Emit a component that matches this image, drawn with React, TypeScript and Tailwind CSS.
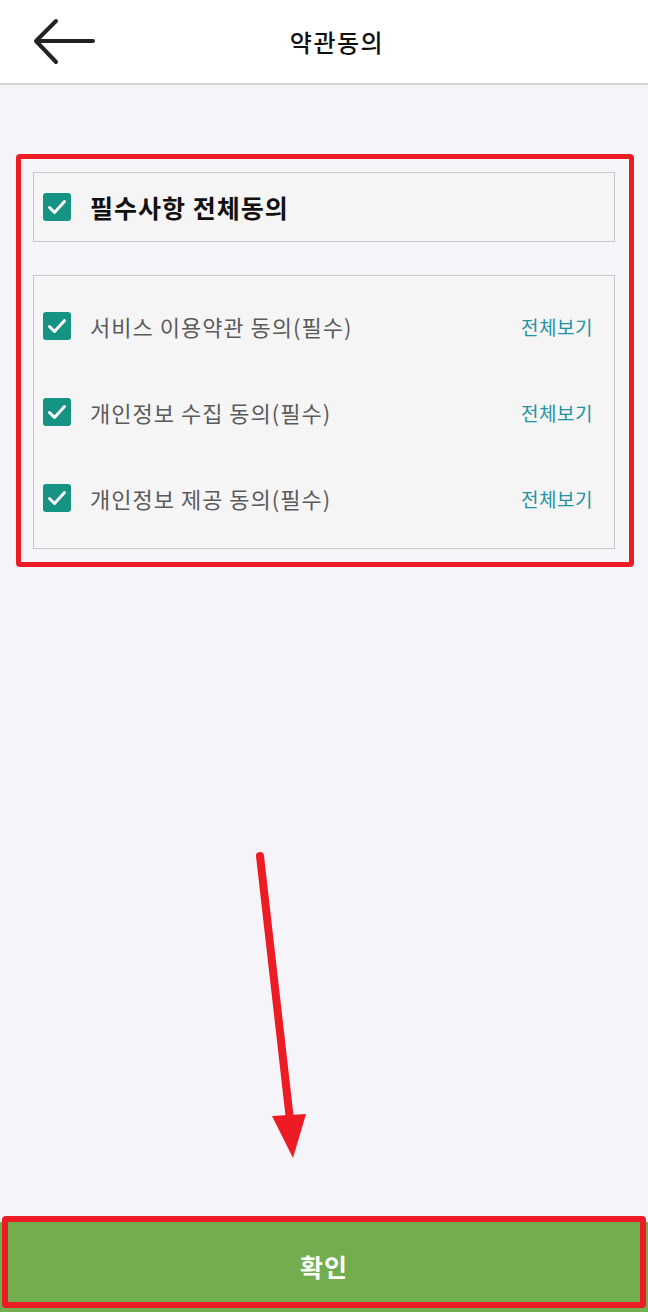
import React from "react";

const font = { fontFamily: '"Noto Sans CJK KR", "Noto Sans", sans-serif' };

function Check() {
  return (
    <div className="w-[28px] h-[28px] rounded-[3px] bg-[#159383] flex items-center justify-center shrink-0">
      <svg width="28" height="28" viewBox="0 0 28 28">
        <path d="M6.5 14.5 L11.5 19.5 L21.5 8.5" fill="none" stroke="#ffffff" strokeWidth="3" strokeLinecap="round" strokeLinejoin="round" />
      </svg>
    </div>
  );
}

function Row({ label }: { label: string }) {
  return (
    <div className="h-[86px] flex items-center pl-[9px] pr-[21px]">
      <Check />
      <span className="ml-[19px] text-[22px] tracking-[1px] text-[#5b5b5b] leading-none flex-1">{label}</span>
      <span className="text-[19px] tracking-[0.5px] text-[#2293a5] leading-none">전체보기</span>
    </div>
  );
}

export default function App() {
  return (
    <div className="relative w-[648px] h-[1312px] flex flex-col bg-[#f4f4f9] overflow-hidden" style={font}>
      <header className="h-[85px] shrink-0 bg-white border-b-2 border-[#d3d3d3] flex items-center relative">
        <div className="absolute left-[31px] top-[18px]">
          <svg width="66" height="48" viewBox="0 0 66 48">
            <path d="M62 23 H6 M25 3 L5 23 L25 44" fill="none" stroke="#222222" strokeWidth="4" strokeLinecap="round" strokeLinejoin="round" />
          </svg>
        </div>
        <div className="flex-1 text-center pl-[26px] text-[24px] tracking-[1.5px] font-medium text-[#111111] leading-none">약관동의</div>
      </header>

      <main className="flex-1 pt-[69px]">
        <div className="ml-[16px] w-[618px] border-[5px] border-[#ed1c24] rounded-[4px] pl-[12px] pr-[14px] pt-[13px] pb-[13px]">
          <div className="h-[70px] border border-[#c9c9c9] bg-[#f5f5f5] flex items-center pl-[9px]">
            <Check />
            <span className="ml-[19px] text-[25px] tracking-[1px] font-bold text-[#111111] leading-none">필수사항 전체동의</span>
          </div>
          <div className="mt-[33px] border border-[#c9c9c9] bg-[#f5f5f5] py-[7px]">
            <Row label="서비스 이용약관 동의(필수)" />
            <Row label="개인정보 수집 동의(필수)" />
            <Row label="개인정보 제공 동의(필수)" />
          </div>
        </div>
      </main>

      <div className="relative h-[90px] shrink-0 bg-[#72ae4e] flex items-center justify-center">
        <span className="text-[25px] tracking-[1px] font-bold text-white leading-none -mt-[2px]">확인</span>
        <div className="absolute left-[2px] top-[-6px] w-[644px] h-[92px] border-[6px] border-[#ed1c24] rounded-[4px] pointer-events-none" />
      </div>

      <svg className="absolute left-0 top-0 pointer-events-none" width="648" height="1312" viewBox="0 0 648 1312">
        <line x1="260" y1="856" x2="290" y2="1120" stroke="#ed1c24" strokeWidth="8" strokeLinecap="round" />
        <polygon points="272,1116 306,1114 293,1158" fill="#ed1c24" />
      </svg>
    </div>
  );
}
